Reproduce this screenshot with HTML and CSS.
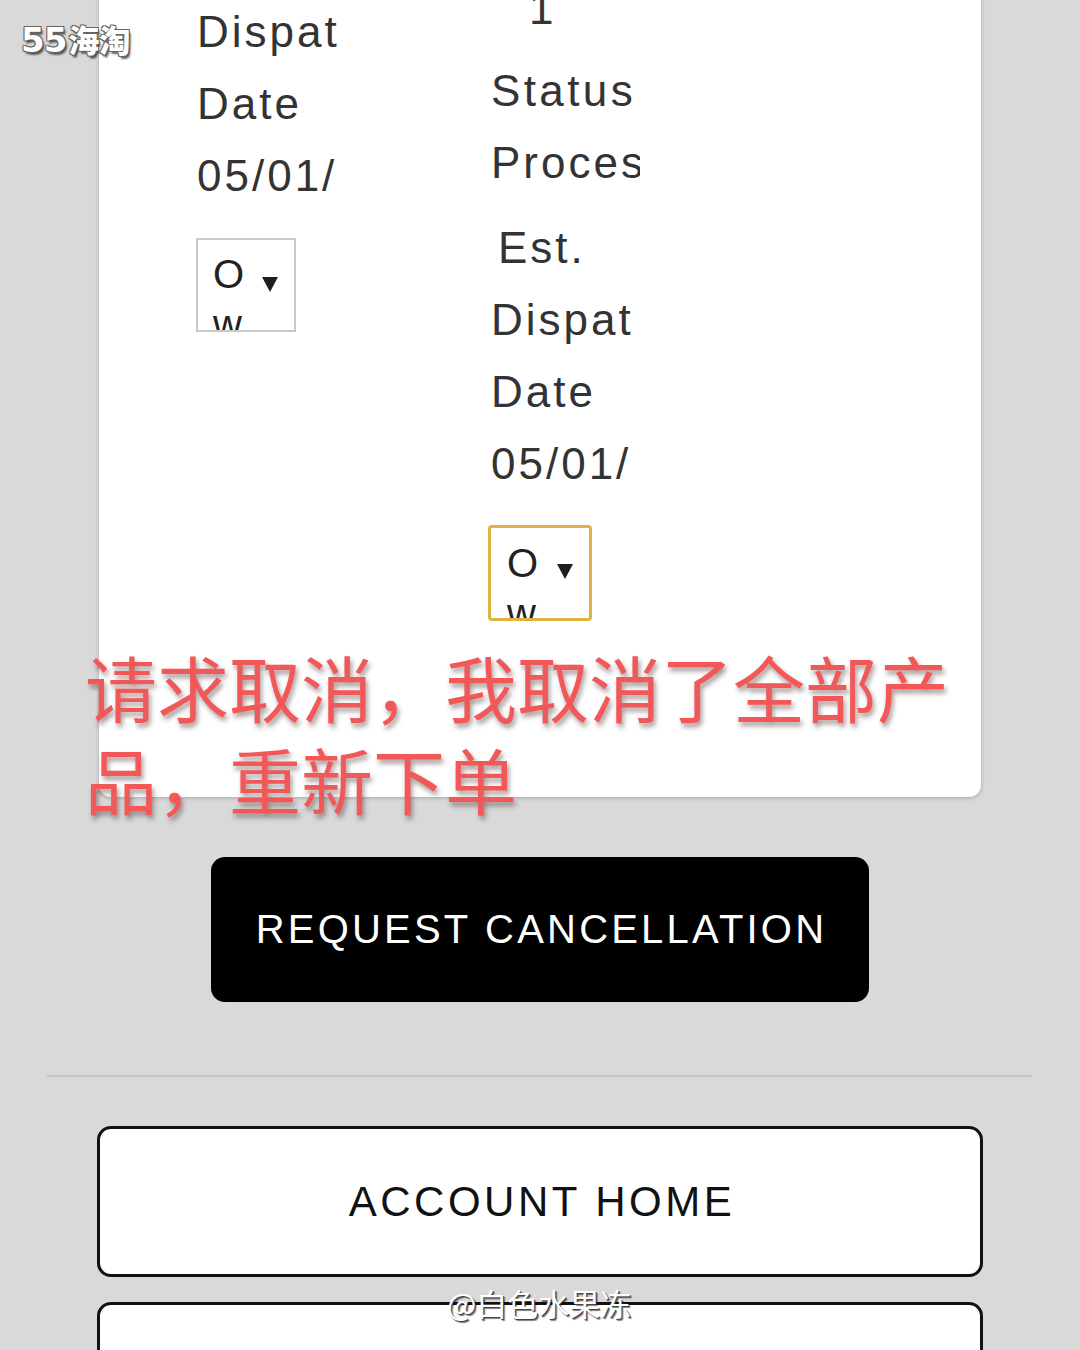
FILE: index.html
```html
<!DOCTYPE html>
<html lang="zh">
<head>
<meta charset="utf-8">
<title>Order</title>
<link rel="stylesheet" href="styles.css">
</head>
<body>
<div class="page">
  <section class="card">
    <div class="cols">
      <div class="col col-left">
        <div class="line clip-sm">Est.</div>
        <div class="line clip-sm">Dispatch</div>
        <div class="line clip-sm">Date</div>
        <div class="line clip-sm">05/01/2024</div>
        <div class="select select-grey"><span class="sel-text">O w</span><span class="caret"></span></div>
      </div>
      <div class="col col-right">
        <div class="line line-qty">1</div>
        <div class="line line-gap">Status</div>
        <div class="line">Processing</div>
        <div class="line line-est">Est.</div>
        <div class="line clip-sm">Dispatch</div>
        <div class="line clip-sm">Date</div>
        <div class="line clip-sm">05/01/2024</div>
        <div class="select select-focus"><span class="sel-text">O w</span><span class="caret"></span></div>
      </div>
    </div>
  </section>

  <div class="cancel-wrap">
    <button class="btn-cancel">REQUEST CANCELLATION</button>
  </div>

  <div class="divider"></div>

  <button class="btn-outline">ACCOUNT HOME</button>
  <button class="btn-outline btn-next"></button>

  <div class="note">请求取消，我取消了全部产品，重新下单</div>
  <div class="logo"><span class="logo-num">55</span><span class="logo-cn">海淘</span></div>
  <div class="watermark">@白色水果冻</div>
</div>
</body>
</html>
```

FILE: styles.css
```css
html, body {
  margin: 0;
  padding: 0;
}
body {
  background: #d9d9d9;
  font-family: "Liberation Sans", Arial, sans-serif;
}
.page {
  position: relative;
  width: 1080px;
  height: 1350px;
  overflow: hidden;
}
.card {
  margin: -76px 99px 0 99px;
  background: #fff;
  border-radius: 0 0 12px 12px;
  box-shadow: 0 1px 4px rgba(0, 0, 0, 0.22);
  padding: 0 0 176px 98px;
}
.cols {
  display: flex;
  gap: 148px;
  align-items: flex-start;
}
.col {
  display: flex;
  flex-direction: column;
  align-items: flex-start;
}
.col-left {
  width: 146px;
}
.col-right {
  width: 149px;
  padding-top: 49px;
}
.line {
  box-sizing: border-box;
  width: 149px;
  font-size: 44px;
  line-height: 72px;
  height: 72px;
  letter-spacing: 3px;
  color: #333;
  white-space: nowrap;
  overflow: hidden;
}
.clip-sm {
  width: 141px;
}
.line-qty {
  padding-left: 38px;
}
.line-gap {
  margin-top: 10px;
  letter-spacing: 3.4px;
}
.line-est {
  margin-top: 13px;
  padding-left: 7px;
}
.select {
  position: relative;
  box-sizing: border-box;
  overflow: hidden;
  background: #fff;
  font-size: 40px;
  line-height: 50px;
  color: #222;
}
.sel-text {
  display: block;
  width: 40px;
}
.select-grey {
  margin-top: 26px;
  margin-left: -1px;
  width: 100px;
  height: 94px;
  border: 2px solid #c9c9c9;
  padding: 9px 0 0 15px;
}
.select-focus {
  margin-top: 25px;
  margin-left: -3px;
  width: 104px;
  height: 96px;
  border: 3px solid #e0b241;
  border-radius: 4px;
  padding: 10px 0 0 16px;
}
.caret {
  position: absolute;
  width: 0;
  height: 0;
  border-left: 8px solid transparent;
  border-right: 8px solid transparent;
  border-top: 15px solid #1e1e1e;
}
.select-grey .caret {
  left: 64px;
  top: 37px;
}
.select-focus .caret {
  left: 66px;
  top: 36px;
}
.cancel-wrap {
  display: flex;
  justify-content: center;
  margin-top: 60px;
}
.btn-cancel {
  width: 658px;
  height: 145px;
  background: #000;
  color: #fff;
  border: none;
  border-radius: 14px;
  font-family: "Liberation Sans", Arial, sans-serif;
  font-size: 40px;
  letter-spacing: 3.2px;
  padding: 0 0 0 3px;
}
.divider {
  margin: 73px 48px 0 47px;
  height: 2px;
  background: #c5c5c5;
}
.btn-outline {
  display: block;
  box-sizing: border-box;
  margin: 49px 97px 0 97px;
  width: 886px;
  height: 151px;
  background: #fff;
  color: #111;
  border: 3px solid #111;
  border-radius: 14px;
  font-family: "Liberation Sans", Arial, sans-serif;
  font-size: 42px;
  letter-spacing: 3.5px;
  padding: 0 0 0 4px;
}
.btn-next {
  margin-top: 25px;
  height: 150px;
}
.note {
  position: absolute;
  left: 85px;
  top: 640px;
  width: 890px;
  font-family: "Noto Sans CJK SC", sans-serif;
  font-weight: 400;
  font-size: 72px;
  line-height: 92px;
  color: #f35858;
  text-shadow: 2px 4px 5px rgba(60, 30, 30, 0.45);
}
.logo {
  position: absolute;
  left: 21px;
  top: 16px;
  display: flex;
  align-items: baseline;
  color: #fff;
  text-shadow: -1px -1px 0 #666, 1px -1px 0 #666, -1px 1px 0 #666, 1px 1px 0 #555, 2px 3px 2px rgba(0, 0, 0, 0.6);
}
.logo-num {
  font-family: "DejaVu Sans", sans-serif;
  font-weight: 700;
  font-size: 34px;
  letter-spacing: -1px;
}
.logo-cn {
  font-family: "Noto Sans CJK SC", sans-serif;
  font-weight: 900;
  font-size: 31px;
  margin-left: 2px;
}
.watermark {
  position: absolute;
  left: 447px;
  top: 1281px;
  font-family: "Noto Sans CJK SC", sans-serif;
  font-size: 31px;
  line-height: 44px;
  color: #fff;
  text-shadow: 1px 1px 0 #444, 2px 2px 1px rgba(0, 0, 0, 0.5);
}
```
